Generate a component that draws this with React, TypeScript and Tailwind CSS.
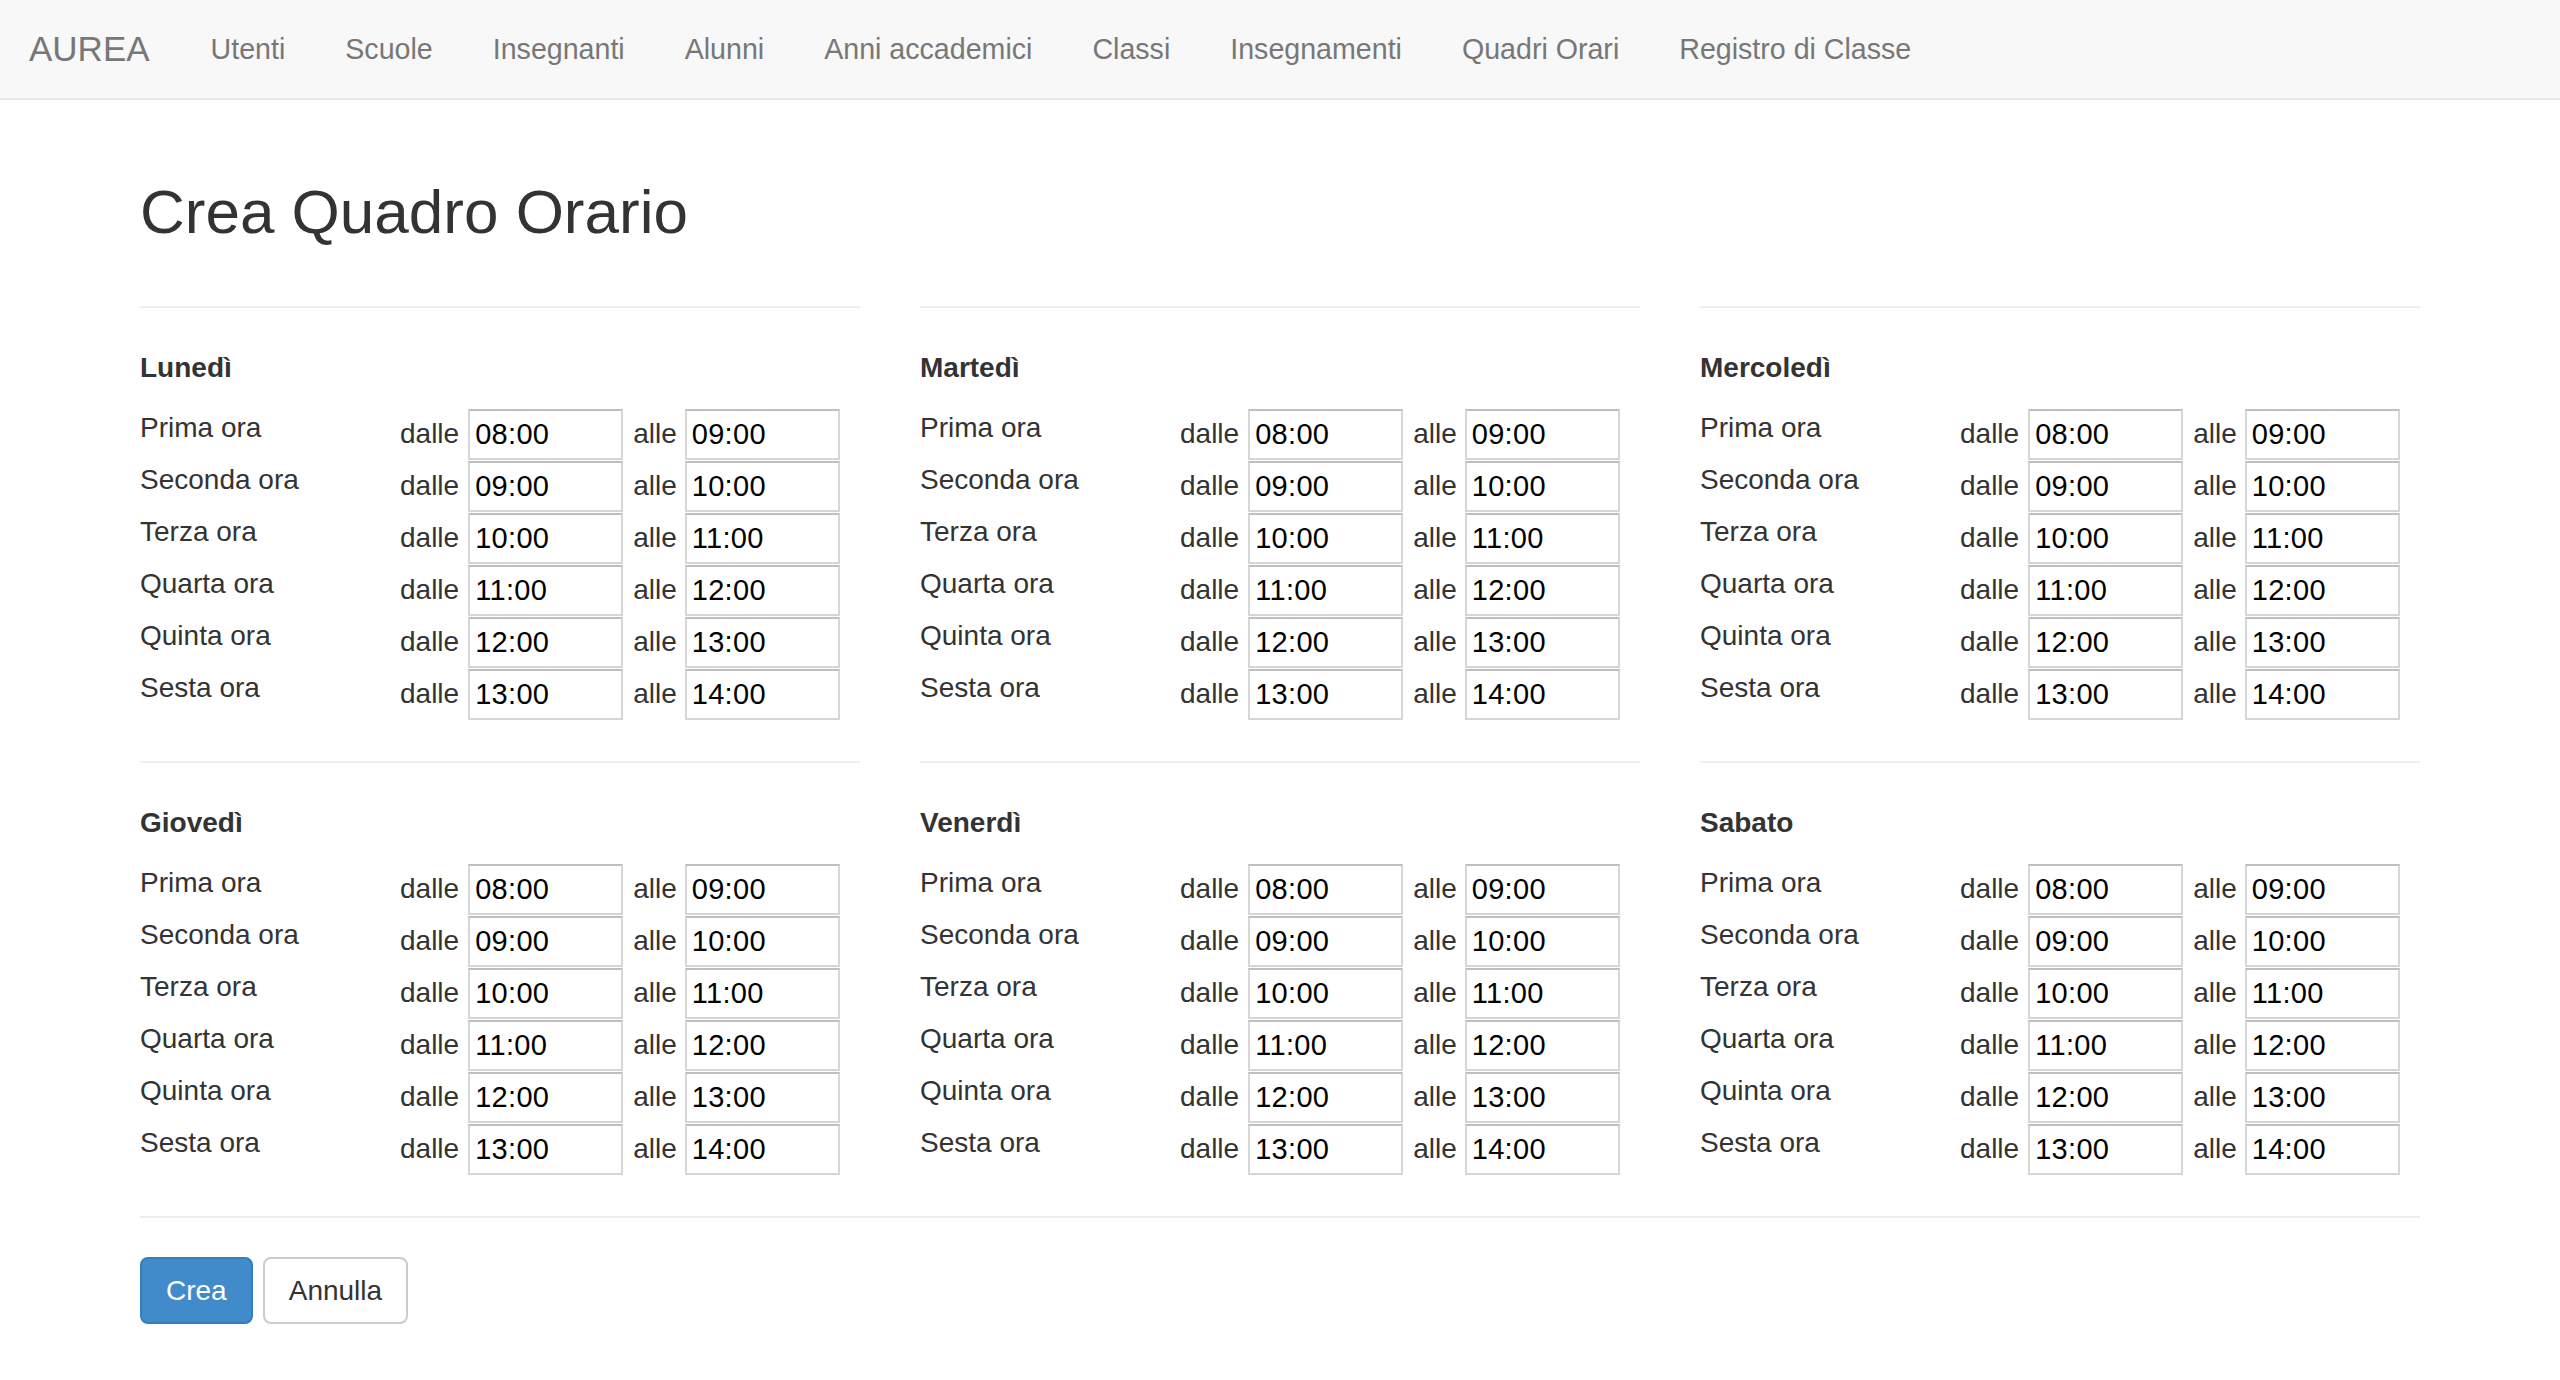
import React from "react";

const navItems = [
  "Utenti",
  "Scuole",
  "Insegnanti",
  "Alunni",
  "Anni accademici",
  "Classi",
  "Insegnamenti",
  "Quadri Orari",
  "Registro di Classe",
];

const days = ["Lunedì", "Martedì", "Mercoledì", "Giovedì", "Venerdì", "Sabato"];

const hours = [
  ["Prima ora", "08:00", "09:00"],
  ["Seconda ora", "09:00", "10:00"],
  ["Terza ora", "10:00", "11:00"],
  ["Quarta ora", "11:00", "12:00"],
  ["Quinta ora", "12:00", "13:00"],
  ["Sesta ora", "13:00", "14:00"],
];

function TimeInput({ value, className }: { value: string; className?: string }) {
  return (
    <input
      type="text"
      readOnly
      value={value}
      className={
        "w-[155px] h-[51px] border-2 border-[#d6d6d6] border-t-[#bfbfbf] bg-white pl-[5px] text-[29px] tracking-[0.3px] text-black outline-none font-['Liberation_Sans',Arial,sans-serif] " +
        (className ?? "")
      }
    />
  );
}

function DayBlock({ day }: { day: string }) {
  return (
    <div className="pb-[41px]">
      <div className="h-[2px] bg-[#eeeeee]" />
      <div className="mt-[40px] mb-[20px] text-[28px] leading-[40px] font-bold text-[#333]">{day}</div>
      {hours.map(([label, from, to]) => (
        <div key={label} className="flex h-[52px]">
          <div className="w-[260px] text-[28px] leading-[40px] text-[#333]">{label}</div>
          <div className="flex items-center h-[52px]">
            <span className="text-[28px] leading-[40px] text-[#333]">dalle</span>
            <TimeInput value={from} className="ml-[9px]" />
            <span className="ml-[10px] text-[28px] leading-[40px] text-[#333]">alle</span>
            <TimeInput value={to} className="ml-[8px]" />
          </div>
        </div>
      ))}
    </div>
  );
}

export default function App() {
  return (
    <div className="min-h-screen bg-white text-[#333] font-['Liberation_Sans',Arial,Helvetica,sans-serif]">
      <nav className="h-[100px] bg-[#f8f8f8] border-b-2 border-[#e7e7e7] flex items-center pl-[29px]">
        <span className="text-[35px] text-[#777] pr-[31px]">AUREA</span>
        <ul className="flex items-center">
          {navItems.map((item) => (
            <li key={item} className="px-[30px] text-[28.6px] text-[#777]">
              {item}
            </li>
          ))}
        </ul>
      </nav>
      <main className="px-[140px]">
        <h1 className="mt-[78px] text-[62px] leading-[68px] font-normal text-[#333]">Crea Quadro Orario</h1>
        <div className="mt-[60px] grid grid-cols-3 gap-x-[60px]">
          {days.map((d) => (
            <DayBlock key={d} day={d} />
          ))}
        </div>
        <div className="h-[2px] bg-[#eeeeee]" />
        <div className="mt-[39px] flex gap-[10px]">
          <button className="h-[67px] px-[24px] rounded-[8px] border-2 border-[#357ebd] bg-[#428bca] text-white text-[28px]">
            Crea
          </button>
          <button className="h-[67px] px-[24px] rounded-[8px] border-2 border-[#cccccc] bg-white text-[#333] text-[28px]">
            Annulla
          </button>
        </div>
      </main>
    </div>
  );
}
